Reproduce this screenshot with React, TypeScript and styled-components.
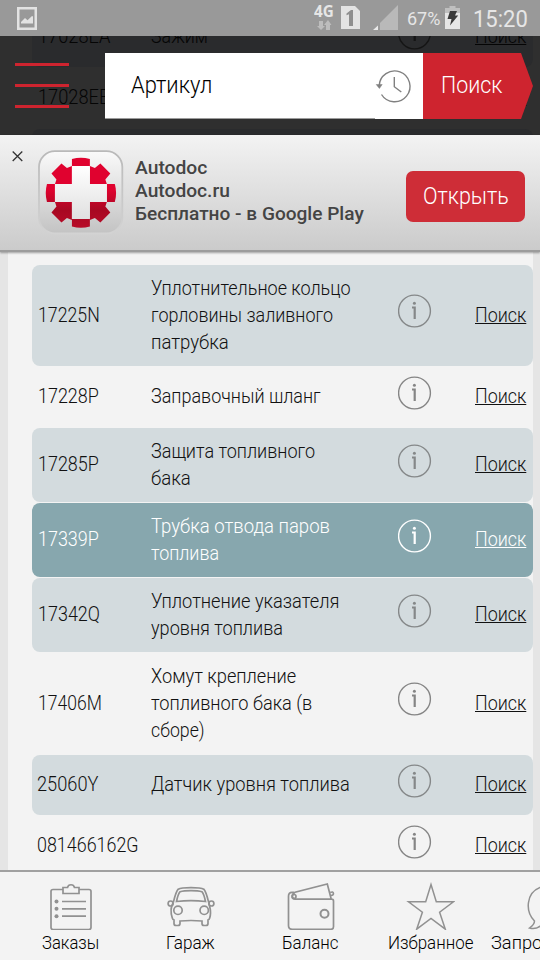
import React, { useLayoutEffect, useRef, useState } from 'react';
import styled, { createGlobalStyle, css } from 'styled-components';

const GlobalStyle = createGlobalStyle`
  * { box-sizing: border-box; }
  html, body { margin: 0; padding: 0; overflow: hidden; }
  body { font-family: Roboto, "Noto Sans", sans-serif; font-weight: 300; color: #111; }
`;

/* ---------- text condensed or widened to a given measure ---------- */

const FitBox = styled.span<{ $w: number }>`
  display: block;
  width: ${(p) => p.$w}px;
  white-space: nowrap;
`;

const FitInner = styled.span<{ $underline?: boolean }>`
  display: inline-block;
  transform-origin: 0 50%;
  ${(p) =>
    p.$underline &&
    css`
      text-decoration: underline;
      text-decoration-thickness: 1px;
      text-underline-offset: 1px;
      text-decoration-skip-ink: none;
    `}
`;

function Fit({ w, underline, children }: { w: number; underline?: boolean; children: string }) {
  const ref = useRef<HTMLSpanElement>(null);
  const [scale, setScale] = useState(1);
  useLayoutEffect(() => {
    if (ref.current && ref.current.offsetWidth) setScale(w / ref.current.offsetWidth);
  }, [w, children]);
  return (
    <FitBox $w={w}>
      <FitInner ref={ref} $underline={underline} style={{ transform: `scaleX(${scale})` }}>
        {children}
      </FitInner>
    </FitBox>
  );
}

/* ---------- page ---------- */

const Page = styled.div`
  width: 540px;
  height: 960px;
  display: flex;
  flex-direction: column;
  overflow: hidden;
  background: #e5e5e5;
`;

const StatusBar = styled.div`
  flex: none;
  height: 36px;
  padding: 0 12px 0 16px;
  display: flex;
  align-items: center;
  justify-content: space-between;
  background: #999;
  color: #e6e6e6;
  font-weight: 400;
`;

const StatusIcons = styled.svg`
  display: block;
  flex: none;
`;

const StatusGroup = styled.div`
  display: flex;
  align-items: center;
`;

const Network = styled.div`
  width: 20px;
  height: 36px;
  margin-right: 7px;
  padding-top: 2px;
  font: 700 16px/18px "Open Sans", sans-serif;
`;

const Percent = styled.div`
  margin: 1px 5px 0 9px;
  font-size: 18px;
  line-height: 36px;
`;

const Clock = styled.div`
  margin-left: 12px;
  padding-top: 1px;
  font-size: 24px;
  line-height: 36px;
`;

/* ---------- search header ---------- */

const Header = styled.header`
  flex: none;
  position: relative;
  height: 99px;
  padding: 17px 7px 0 15px;
  display: flex;
  align-items: flex-start;
  background: #2f2f2f;
  overflow: hidden;
`;

const Underlay = styled.div`
  position: absolute;
  left: 0;
  right: 0;
  top: -29px;
  padding: 0 7px 0 32px;
  display: flex;
  flex-direction: column;
  gap: 1px;
`;

const MenuButton = styled.button`
  position: relative;
  width: 54px;
  height: 45px;
  margin: 10px 36px 0 0;
  padding: 0;
  border: 0;
  background: none;
  display: flex;
  flex-direction: column;
  justify-content: space-between;
`;

const MenuBar = styled.span`
  display: block;
  width: 54px;
  height: 3px;
  background: #ce242f;
`;

const SearchField = styled.div`
  position: relative;
  width: 270px;
  height: 66px;
  padding: 0 0 1px 26px;
  display: flex;
  align-items: center;
  background: #fff;
  border-bottom: 1px solid #9b9b9b;
  font-size: 23.5px;
  color: #000;
`;

const HistoryButton = styled.div`
  position: relative;
  width: 48px;
  height: 66px;
  background: #fff;
  display: flex;
  align-items: center;
`;

const SearchButton = styled.div`
  position: relative;
  width: 110px;
  height: 66px;
  padding: 0 0 2px 18px;
  display: flex;
  align-items: center;
  background: #ce242f;
  clip-path: polygon(0 0, 98px 0, 100% 50%, 98px 100%, 0 100%);
  font-size: 23.5px;
  color: #fff;
`;

/* ---------- install banner ---------- */

const Banner = styled.section`
  flex: none;
  position: relative;
  z-index: 1;
  height: 117px;
  padding: 15px 15px 0 11px;
  display: flex;
  align-items: flex-start;
  background: linear-gradient(#f3f3f3, #cbcbcb);
  border-bottom: 2px solid #9c9c9c;
  box-shadow: 0 1px 2px rgba(0, 0, 0, 0.35);
`;

const CloseIcon = styled.svg`
  margin: 0 15px 0 0;
`;

const BannerText = styled.div`
  width: 272px;
  margin: 6px 0 0 11px;
  font-size: 19px;
  font-weight: 500;
  line-height: 23px;
  color: #444;
`;

const OpenButton = styled.button`
  width: 119px;
  height: 51px;
  margin: 21px 0 0;
  padding: 0 0 1px 17px;
  display: flex;
  align-items: center;
  border: 0;
  border-radius: 7px;
  background: #ce2d37;
  color: #fff;
  font-family: inherit;
  font-size: 23.5px;
  font-weight: 300;
  text-align: left;
`;

/* ---------- parts list ---------- */

type Tone = 'plain' | 'tinted' | 'active' | 'dim' | 'dimTinted';

const tones: Record<Tone, { bg: string; fg: string; icon: string }> = {
  plain: { bg: 'transparent', fg: '#111', icon: '#858585' },
  tinted: { bg: '#d3dbde', fg: '#111', icon: '#858889' },
  active: { bg: '#87a7ae', fg: '#fff', icon: '#fff' },
  dim: { bg: 'transparent', fg: '#050505', icon: '#151515' },
  dimTinted: { bg: '#2a2b2d', fg: '#050505', icon: '#151515' },
};

const List = styled.main`
  flex: 1;
  min-height: 0;
  margin: 0 7px 0 8px;
  padding: 13px 0 0 24px;
  display: flex;
  flex-direction: column;
  gap: 1px;
  background: #f3f3f3;
  overflow: hidden;
`;

const Row = styled.div<{ $tone: Tone }>`
  flex: none;
  min-height: 60px;
  padding: 9.8px 7px 10.2px 6px;
  display: grid;
  grid-template-columns: 113px 247px 34px 1fr;
  align-items: center;
  border-radius: 8px;
  background: ${(p) => tones[p.$tone].bg};
  color: ${(p) => tones[p.$tone].fg};
  font-size: 20px;
  line-height: 27px;
`;

const Code = styled.div<{ $shift?: boolean }>`
  margin-left: ${(p) => (p.$shift ? '-1px' : '0')};
`;

const LinkCell = styled.div`
  justify-self: end;
`;

const InfoSvg = styled.svg`
  display: block;
  margin-top: -8px;
`;

function InfoIcon({ color }: { color: string }) {
  return (
    <InfoSvg width="34" height="34" viewBox="0 0 34 34" fill="none">
      <circle cx="16.5" cy="17" r="15.9" stroke={color} strokeWidth="1.4" />
      <path d="M14 13.5h2.7V25" stroke={color} strokeWidth="2.2" />
      <circle cx="16.4" cy="9.3" r="1.5" fill={color} />
    </InfoSvg>
  );
}

interface Part {
  code: [string, number];
  lines: [string, number][];
  tone: Tone;
  shift?: boolean;
}

const parts: Part[] = [
  { code: ['17225N', 62], lines: [['Уплотнительное кольцо', 200], ['горловины заливного', 182], ['патрубка', 78]], tone: 'tinted' },
  { code: ['17228P', 61], lines: [['Заправочный шланг', 170]], tone: 'plain' },
  { code: ['17285P', 61], lines: [['Защита топливного', 164], ['бака', 40]], tone: 'tinted' },
  { code: ['17339P', 61], lines: [['Трубка отвода паров', 179], ['топлива', 68]], tone: 'active' },
  { code: ['17342Q', 62], lines: [['Уплотнение указателя', 188], ['уровня топлива', 132]], tone: 'tinted' },
  { code: ['17406M', 64], lines: [['Хомут крепление', 145], ['топливного бака (в', 161], ['сборе)', 54]], tone: 'plain' },
  { code: ['25060Y', 61], lines: [['Датчик уровня топлива', 199]], tone: 'tinted', shift: true },
  { code: ['081466162G', 102], lines: [], tone: 'plain', shift: true },
];

const hiddenParts: Part[] = [
  { code: ['17028EA', 72], lines: [['Зажим', 57]], tone: 'dimTinted' },
  { code: ['17028EB', 72], lines: [], tone: 'dim' },
  { code: ['17040', 50], lines: [], tone: 'dimTinted' },
];

function PartRow({ part }: { part: Part }) {
  return (
    <Row $tone={part.tone}>
      <Code $shift={part.shift}>
        <Fit w={part.code[1]}>{part.code[0]}</Fit>
      </Code>
      <div>
        {part.lines.map(([text, w]) => (
          <Fit key={text} w={w}>{text}</Fit>
        ))}
      </div>
      <InfoIcon color={tones[part.tone].icon} />
      <LinkCell>
        <Fit w={51} underline>Поиск</Fit>
      </LinkCell>
    </Row>
  );
}

/* ---------- bottom navigation ---------- */

const Nav = styled.nav`
  flex: none;
  height: 90px;
  padding: 8px 0 0 10px;
  display: flex;
  background: #f3f3f3;
  border-top: 2px solid #a0a0a0;
  overflow: hidden;
`;

const NavItem = styled.div`
  flex: none;
  width: 120px;
  display: flex;
  flex-direction: column;
  align-items: center;
  font-size: 17.5px;
  line-height: 26px;
  color: #000;
`;

const NavIcon = styled.svg.attrs({ width: 50, height: 50, viewBox: '0 0 50 50', fill: 'none' })`
  flex: none;
  stroke: #919191;
  stroke-width: 1.7;
`;

const ClipboardIcon = () => (
  <NavIcon>
    <path d="M18 9.5H8q-2 0-2 2v36q0 2 2 2h36q2 0 2-2v-36q0-2-2-2H34" />
    <path d="M18 7.5h4.5a3.6 3.6 0 0 1 7 0H34v6H18z" />
    <path d="M17 21.5h24M17 28.8h24M17 36.2h24" />
    <g fill="#919191" stroke="none">
      <circle cx="11.5" cy="21.5" r="2" />
      <circle cx="11.5" cy="28.8" r="2" />
      <circle cx="11.5" cy="36.2" r="2" />
    </g>
  </NavIcon>
);

const CarIcon = () => (
  <NavIcon>
    <path d="M8.3 22.5C9.7 17 11 11.5 13.2 9.2 17 7.2 35 7.2 38.8 9.2c2.2 2.3 3.5 7.8 4.9 13.3" />
    <path d="M11.5 21.5c.8-4 2-8 3.5-9.8 5-1.5 17-1.5 22 0 1.5 1.8 2.7 5.8 3.5 9.8-8-1-21-1-29 0z" />
    <path d="M8.3 22.5C5.5 27 5.7 33 7.3 38q.5 1.7 1.7 2v3.5q0 2 2 2h2q2 0 2-2V41q11-1 22 0v2.5q0 2 2 2h2q2 0 2-2V40q1.200-.3 1.700-2 1.600-5 0-11.500-.5-2.500-1-4" />
    <circle cx="5.600" cy="23.500" r="2.500" />
    <circle cx="46.400" cy="23.500" r="2.500" />
    <circle cx="13" cy="30.300" r="4.200" />
    <circle cx="39.200" cy="30.300" r="4.200" />
  </NavIcon>
);

const WalletIcon = () => (
  <NavIcon>
    <path d="M9 12.300H7q-3.500 0-3.500 4V45.500q0 3.800 3.800 3.800H46q2.500 0 2.500-2.500V21q0-1.800-1.800-1.800H10q-2.600-.3-2.600-3 .1-2.300 2.600-3.900L42.300 4l3.900 15" />
    <circle cx="9" cy="16.500" r="2" />
    <path d="M45.200 12.500q3-1.300 3.200.8.200 2-2.400 2.200" />
    <circle cx="39.500" cy="33.800" r="4" strokeWidth="2" />
  </NavIcon>
);

const StarIcon = () => (
  <NavIcon>
    <path d="M26 4.500l5.300 17.300h17.200L34.600 32.200l5.700 17L26 38.500 11.700 49.200l5.700-17L3.500 21.800h17.200z" strokeWidth="1.500" />
  </NavIcon>
);

const QuestionIcon = () => (
  <NavIcon>
    <path d="M9.500 41C0 31.500 1 13 15 7.500 30 2 48 11 48 25.500 48 40 32 49.500 17 44.500 13 48.500 8 49 4.500 48q5-3.500 5-7z" strokeWidth="1.500" />
  </NavIcon>
);

const navItems: { icon: React.ComponentType; label: string; w: number }[] = [
  { icon: ClipboardIcon, label: 'Заказы', w: 57 },
  { icon: CarIcon, label: 'Гараж', w: 49 },
  { icon: WalletIcon, label: 'Баланс', w: 56 },
  { icon: StarIcon, label: 'Избранное', w: 85 },
  { icon: QuestionIcon, label: 'Запрос по VIN', w: 119 },
];

function AppLogo() {
  return (
    <svg width="86" height="86" viewBox="38 150 86 86" fill="none">
      <defs>
        <linearGradient id="tile" x1="0" y1="0" x2="0" y2="1">
          <stop offset="0" stopColor="#fafafa" />
          <stop offset="1" stopColor="#c3c3c3" />
        </linearGradient>
        <linearGradient id="edge" x1="0" y1="0" x2="0" y2="1">
          <stop offset="0" stopColor="#b9b9b9" />
          <stop offset="1" stopColor="#d3d3d3" />
        </linearGradient>
        <linearGradient id="gear" gradientUnits="userSpaceOnUse" x1="0" y1="158" x2="0" y2="228">
          <stop offset="0.45" stopColor="#e0022f" />
          <stop offset="0.75" stopColor="#a80822" />
          <stop offset="1" stopColor="#b80c28" />
        </linearGradient>
        <linearGradient id="cross" x1="0" y1="0" x2="0" y2="1">
          <stop offset="0" stopColor="#fff" />
          <stop offset="1" stopColor="#e0e0e0" />
        </linearGradient>
      </defs>
      <rect x="39" y="151" width="83.500" height="82.500" rx="16" fill="url(#tile)" stroke="url(#edge)" strokeWidth="1.800" />
      <g fill="url(#gear)">
        <path d="M72 159q9-2.500 18 0v8H72z" />
        <path d="M72 226.500q9 2.500 18 0v-8H72z" />
        <path d="M47 184q-2.500 9 0 18h8v-18z" />
        <path d="M115 184q2.500 9 0 18h-8v-18z" />
        <path d="M72 184H55l1.500-4.500-5-6 10-10 5.500 4.500 5-2z" />
        <path d="M90 184h17l-1.500-4.500 5-6-10-10-5.500 4.500-5-2z" />
        <path d="M72 202H55l1.500 4.500-5 6 10 10 5.500-4.500 5 2z" />
        <path d="M90 202h17l-1.500 4.500 5 6-10 10-5.500-4.500-5 2z" />
      </g>
      <path d="M72 166h18v18h17v18H90v17H72v-17H55v-18h17z" fill="url(#cross)" />
    </svg>
  );
}

export default function App() {
  return (
    <Page>
      <GlobalStyle />
      <StatusBar>
        <StatusIcons width="22" height="26" viewBox="0 0 22 26">
          <path d="M1 2h20v23H1zM3.500 4.500v18h15v-18z" fill="#e3e3e3" fillRule="evenodd" />
          <path d="M5 18.500v-1.500l4-4 2.500 2.200L16 11l1 .5v7z" fill="#e3e3e3" />
        </StatusIcons>
        <StatusGroup>
          <Network>
            <Fit w={20}>4G</Fit>
            <StatusIcons width="20" height="11" viewBox="0 0 20 11">
              <path d="M5 1h4v5h2L7 10 3 6h2zM12 10h4V5h1.500L14 0l-4 5h2z" fill="#bdbdbd" />
            </StatusIcons>
          </Network>
          <StatusIcons width="57" height="30" viewBox="341 3 57 30">
            <path d="M341 6h14l5 5v18h-19z" fill="#e3e3e3" />
            <path d="M346.500 13.500l4.500-3.500h2v16h-4V14.200l-2.500 1z" fill="#8f8f8f" />
            <path d="M398 5v25h-18v-7z" fill="#b9b9b9" />
            <path d="M378 25.500V30h-5z" fill="#e9e9e9" />
          </StatusIcons>
          <Percent>
            <Fit w={33}>67%</Fit>
          </Percent>
          <StatusIcons width="16" height="26" viewBox="445 4 16 26">
            <path d="M449.500 5h6v2h4.500v21h-15V7h4.500z" fill="#bfbfbf" />
            <path d="M445 12h15v16h-15z" fill="#e6e6e6" />
            <path d="M450 10h7l-2 4.500h3.200L450 24.500l1.500-6.500h-4z" fill="#3a3a3a" />
          </StatusIcons>
          <Clock>
            <Fit w={55}>15:20</Fit>
          </Clock>
        </StatusGroup>
      </StatusBar>

      <Header>
        <Underlay>
          {hiddenParts.map((p) => (
            <PartRow key={p.code[0]} part={p} />
          ))}
        </Underlay>
        <MenuButton aria-label="Меню">
          <MenuBar />
          <MenuBar />
          <MenuBar />
        </MenuButton>
        <SearchField>
          <Fit w={81}>Артикул</Fit>
        </SearchField>
        <HistoryButton>
          <svg width="48" height="66" viewBox="375 53 48 66" fill="none" stroke="#808080" strokeWidth="1.400">
            <path d="M379.200 86A15.400 15.400 0 1 1 381.500 94.500" />
            <path d="M376.200 84.500h6l-2.800 4z" fill="#808080" strokeWidth="0.500" />
            <path d="M394.300 77v9.700l7 5.300" />
          </svg>
        </HistoryButton>
        <SearchButton>
          <Fit w={61}>Поиск</Fit>
        </SearchButton>
      </Header>

      <Banner>
        <CloseIcon width="12" height="14" viewBox="11 150 12 14" fill="none" stroke="#333" strokeWidth="1.300">
          <path d="M12.700 151.500l9.600 9.500M22.300 151.500l-9.600 9.500" />
        </CloseIcon>
        <AppLogo />
        <BannerText>
          <Fit w={72}>Autodoc</Fit>
          <Fit w={95}>Autodoc.ru</Fit>
          <Fit w={229}>Бесплатно - в Google Play</Fit>
        </BannerText>
        <OpenButton>
          <Fit w={86}>Открыть</Fit>
        </OpenButton>
      </Banner>

      <List>
        {parts.map((p) => (
          <PartRow key={p.code[0]} part={p} />
        ))}
      </List>

      <Nav>
        {navItems.map(({ icon: Icon, label, w }) => (
          <NavItem key={label}>
            <Icon />
            <Fit w={w}>{label}</Fit>
          </NavItem>
        ))}
      </Nav>
    </Page>
  );
}
